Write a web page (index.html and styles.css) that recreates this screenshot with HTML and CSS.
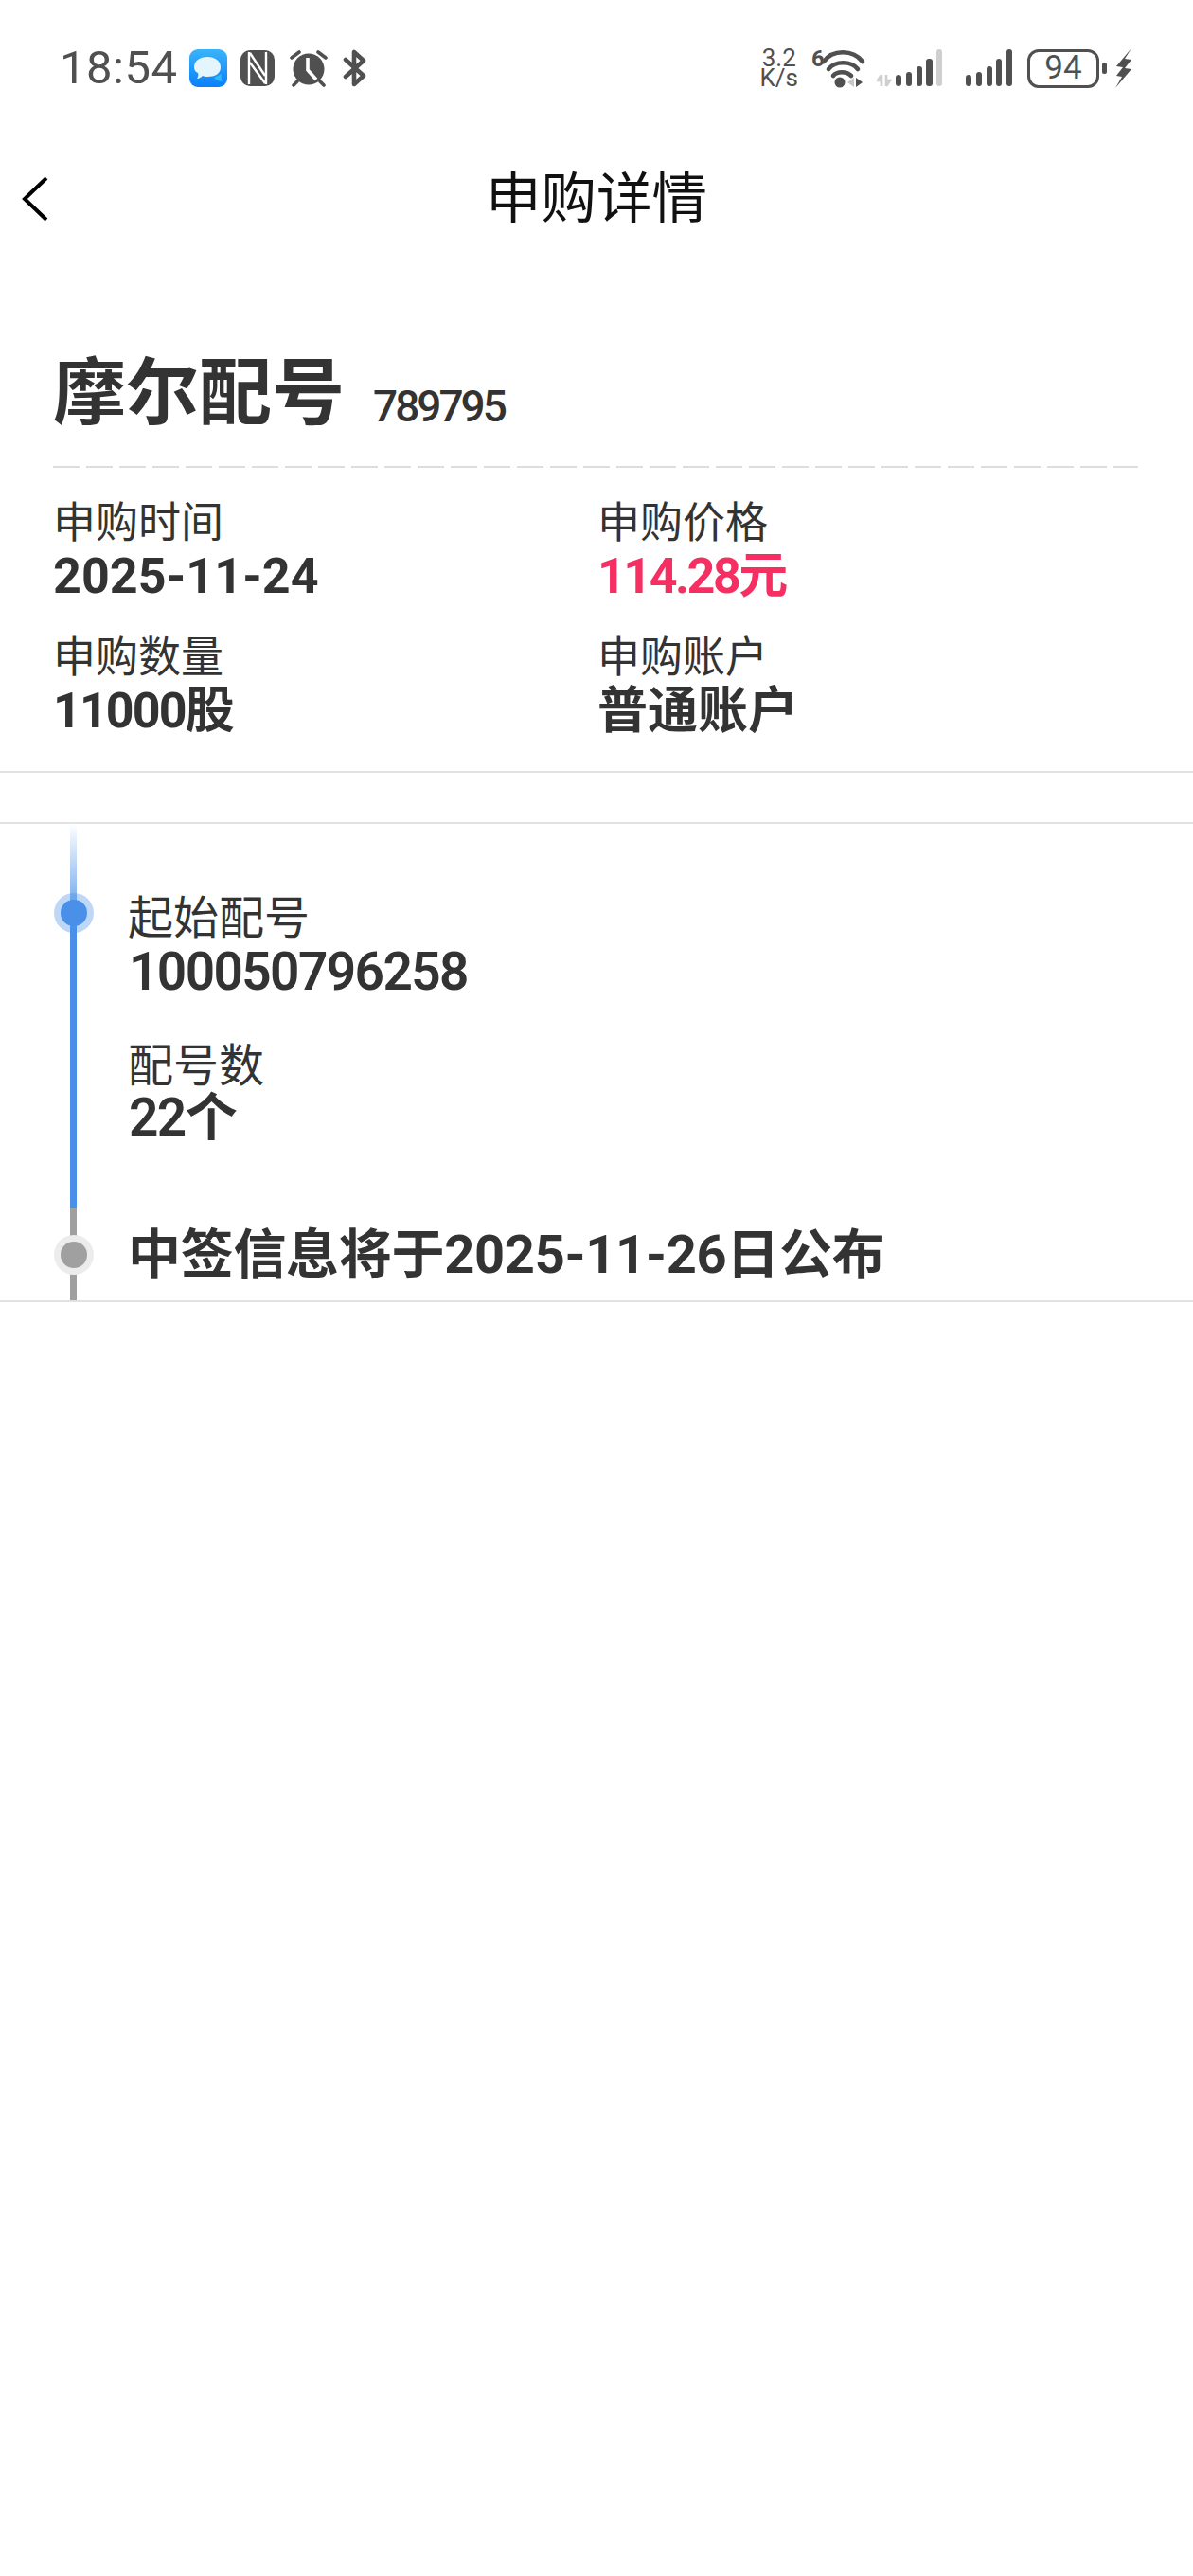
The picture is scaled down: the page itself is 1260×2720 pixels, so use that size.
FILE: index.html
```html
<!DOCTYPE html>
<html lang="zh-CN">
<head>
  <meta charset="UTF-8">
  <title>申购详情</title>
  <link rel="stylesheet" href="styles.css">
</head>
<body>
  <div class="status-bar">
    <div class="status-left">
      <span class="clock">18:54</span>
      <svg class="ico-msg" width="40" height="40" viewBox="0 0 40 40">
        <defs>
          <linearGradient id="msgBg" x1="0" y1="0" x2="0" y2="1">
            <stop offset="0" stop-color="#3ab4fa"/>
            <stop offset="1" stop-color="#0a7ffb"/>
          </linearGradient>
        </defs>
        <rect width="40" height="40" rx="9" fill="url(#msgBg)"/>
        <path d="M26 30c3 3 6 4 9 4-1-2-2-4-1-8z" fill="#2cbcf8"/>
        <path d="M19 8c8 0 14 4 14 11s-6 10-14 10c-2 0-3 0-5-1-2 2-4 3-6 3 1-2 2-4 1-6-3-1-4-4-4-6C5 12 11 8 19 8z" fill="#e4f5fd"/>
      </svg>
      <svg class="ico" width="36" height="38" viewBox="0 0 36 38">
        <rect width="36" height="38" rx="10" fill="#505050"/>
        <path d="M9 2v34M27 2v34M10 3l16 24M10 13l16 22" stroke="#fff" stroke-width="2.4" fill="none"/>
      </svg>
      <svg class="ico" width="42" height="40" viewBox="0 0 42 40">
        <circle cx="21" cy="21" r="16.5" fill="#505050"/>
        <path d="M20 9v13l9 10" stroke="#fff" stroke-width="3.6" fill="none"/>
        <path d="M3 9l8-6M39 9l-8-6M9 34l-4 4M33 34l4 4" stroke="#505050" stroke-width="3.6" stroke-linecap="round" fill="none"/>
      </svg>
      <svg class="ico" width="25" height="40" viewBox="0 0 25 40">
        <path d="M3 29L22 12 12 3v34l10-9L3 11" stroke="#505050" stroke-width="4.6" stroke-linejoin="round" stroke-linecap="round" fill="none"/>
      </svg>
    </div>
    <div class="status-right">
      <div class="speed">3.2<br>K/s</div>
      <svg class="ico ico-wifi" width="56" height="44" viewBox="0 0 56 44">
        <text x="0" y="20" class="wifi-six">6</text>
        <path d="M13 15C22 2 44 2 54 15" stroke="#505050" stroke-width="4.6" stroke-linecap="round" fill="none"/>
        <path d="M18 23c7-9 24-9 31 0" stroke="#505050" stroke-width="4.6" stroke-linecap="round" fill="none"/>
        <path d="M23 30c4-5 14-5 19 0" stroke="#505050" stroke-width="4.6" stroke-linecap="round" fill="none"/>
        <circle cx="30" cy="37" r="5.5" fill="#505050"/>
        <path d="M45 32l-7 5 7 5z" fill="#c8c8c8"/>
        <path d="M47 32l7 5-7 5z" fill="#505050"/>
      </svg>
      <svg class="ico ico-sim1" width="70" height="40" viewBox="0 0 70 40">
        <path d="M5 27v12M5 27l-4 6h4M10 39V27M10 39l4-6h-4" stroke="#cfcfcf" stroke-width="2.6" fill="none"/>
        <rect x="20" y="27" width="6" height="12" rx="3" fill="#505050"/>
        <rect x="31" y="24" width="6" height="15" rx="3" fill="#505050"/>
        <rect x="42" y="18" width="6" height="21" rx="3" fill="#505050"/>
        <rect x="52" y="10" width="7" height="29" rx="3" fill="#505050"/>
        <rect x="63" y="0" width="6" height="39" rx="3" fill="#cfcfcf"/>
      </svg>
      <svg class="ico ico-sim2" width="49" height="40" viewBox="0 0 49 40">
        <rect x="0" y="27" width="6" height="12" rx="3" fill="#505050"/>
        <rect x="11" y="24" width="6" height="15" rx="3" fill="#505050"/>
        <rect x="22" y="18" width="6" height="21" rx="3" fill="#505050"/>
        <rect x="32" y="10" width="6" height="29" rx="3" fill="#505050"/>
        <rect x="43" y="0" width="6" height="39" rx="3" fill="#505050"/>
      </svg>
      <div class="battery"><span class="battery-body">94</span><span class="battery-tip"></span></div>
      <svg class="ico ico-bolt" width="19" height="42" viewBox="0 0 19 42">
        <path d="M18 0L2 19l7 1-7 9 6 1-7 12 17-20-7-1 7-9-7-1z" fill="#505050"/>
      </svg>
    </div>
  </div>

  <div class="nav-bar">
    <svg class="back" width="28" height="48" viewBox="0 0 28 48">
      <path d="M26 2L3 24l23 22" stroke="#000" stroke-width="4" fill="none"/>
    </svg>
    <h1 class="nav-title">申购详情</h1>
  </div>

  <section class="panel info-panel">
    <div class="stock-head">
      <span class="stock-name">摩尔配号</span>
      <span class="stock-code">789795</span>
    </div>
    <div class="dash-line"></div>
    <div class="info-grid">
      <div class="cell">
        <div class="label">申购时间</div>
        <div class="value date">2025-11-24</div>
      </div>
      <div class="cell">
        <div class="label">申购价格</div>
        <div class="value price">114.28元</div>
      </div>
      <div class="cell">
        <div class="label">申购数量</div>
        <div class="value qty">11000股</div>
      </div>
      <div class="cell">
        <div class="label">申购账户</div>
        <div class="value cjk">普通账户</div>
      </div>
    </div>
  </section>

  <section class="panel timeline">
    <div class="rail">
      <span class="dot dot-blue"></span>
      <span class="dot dot-gray"></span>
    </div>
    <div class="steps">
      <div class="step-label">起始配号</div>
      <div class="step-value">100050796258</div>
      <div class="step-label second">配号数</div>
      <div class="step-value">22个</div>
      <div class="notice">中签信息将于2025-11-26日公布</div>
    </div>
  </section>
</body>
</html>
```

FILE: styles.css
```css
* {
  box-sizing: border-box;
}
body {
  margin: 0;
  height: 2720px;
  background: #fff;
  color: #333;
  font-family: Roboto, "Noto Sans CJK SC", sans-serif;
}

/* status bar */
.status-bar {
  height: 140px;
  padding: 50px 64px 0 63px;
  display: flex;
  justify-content: space-between;
  align-items: flex-start;
  color: #505050;
}
.status-left,
.status-right {
  display: flex;
  align-items: center;
  height: 44px;
}
.clock {
  font-size: 49px;
  line-height: 44px;
  width: 137px;
  letter-spacing: 0.5px;
}
.status-left .ico {
  margin-left: 15px;
}
.status-left .ico-msg + .ico {
  margin-left: 14px;
}
.speed {
  font-size: 26px;
  line-height: 21px;
  text-align: center;
}
.wifi-six {
  font: 700 24px Roboto, sans-serif;
  fill: #505050;
}
.ico-wifi {
  margin-left: 14px;
  overflow: visible;
}
.ico-sim1 {
  margin-left: 13px;
}
.ico-sim2 {
  margin-left: 24px;
}
.ico-bolt {
  margin-left: 8px;
}
.battery {
  display: flex;
  align-items: center;
  margin-left: 16px;
}
.battery-body {
  width: 76px;
  height: 41px;
  border: 3.5px solid #505050;
  border-radius: 12px;
  font-size: 35px;
  line-height: 34px;
  text-align: center;
}
.battery-tip {
  width: 5px;
  height: 12px;
  margin-left: 3px;
  border-radius: 2px;
  background: #505050;
}

/* nav */
.nav-bar {
  height: 140px;
  position: relative;
  display: flex;
  align-items: center;
  justify-content: center;
}
.back {
  position: absolute;
  left: 23px;
  top: 46px;
}
.nav-title {
  margin: 0;
  font-size: 58.5px;
  font-weight: 400;
  line-height: 144px;
  color: #111;
}

/* top card */
.panel {
  border-bottom: 2px solid #e2e2e2;
}
.info-panel {
  padding: 90px 58px 0 56px;
  height: 536px;
}
.stock-head {
  display: flex;
  align-items: baseline;
  height: 92px;
}
.stock-name {
  font-size: 77px;
  font-weight: 700;
  line-height: 92px;
}
.stock-code {
  margin-left: 30px;
  font-size: 46px;
  font-weight: 500;
  letter-spacing: -3px;
  position: relative;
  top: 3px;
}
.dash-line {
  height: 2px;
  margin-top: 30px;
  background: repeating-linear-gradient(90deg, #ddd 0 28px, transparent 28px 35px);
}
.info-grid {
  display: grid;
  grid-template-columns: 575px 1fr;
  row-gap: 30px;
  margin-top: 31px;
}
.label {
  font-size: 45px;
  line-height: 56px;
}
.value {
  font-size: 52px;
  font-weight: 700;
  line-height: 56px;
}
.date {
  letter-spacing: 0.1px;
}
.qty {
  letter-spacing: -1.9px;
}
.price {
  color: #f62f62;
  letter-spacing: -2.5px;
}
.cjk {
  font-size: 53px;
}

/* timeline */
.timeline {
  margin-top: 52px;
  height: 507px;
  border-top: 2px solid #e2e2e2;
  display: flex;
}
.rail {
  position: relative;
  flex: none;
  width: 7px;
  margin-left: 74px;
  background: linear-gradient(180deg, rgba(74, 144, 232, 0) 0, #4a90e8 112px, #4a90e8 406px, #a0a0a0 406px);
}
.dot {
  position: absolute;
  left: 50%;
  width: 42px;
  height: 42px;
  margin-left: -21px;
  border-radius: 50%;
}
.dot::after {
  content: "";
  position: absolute;
  left: 7px;
  top: 7px;
  width: 28px;
  height: 28px;
  border-radius: 50%;
}
.dot-blue {
  top: 73px;
  background: rgba(74, 144, 232, 0.36);
}
.dot-blue::after {
  background: #4a90e8;
}
.dot-gray {
  top: 434px;
  background: #ececec;
}
.dot-gray::after {
  background: #a0a0a0;
}
.steps {
  padding: 72px 0 0 54px;
}
.step-label {
  font-size: 48px;
  line-height: 56px;
}
.step-label.second {
  margin-top: 45px;
  line-height: 53px;
}
.step-value {
  font-size: 55px;
  font-weight: 600;
  line-height: 56px;
  letter-spacing: -1.6px;
  padding-left: 1px;
}
.notice {
  margin-top: 87px;
  font-size: 56px;
  font-weight: 700;
  line-height: 60px;
  letter-spacing: -0.3px;
}
```
